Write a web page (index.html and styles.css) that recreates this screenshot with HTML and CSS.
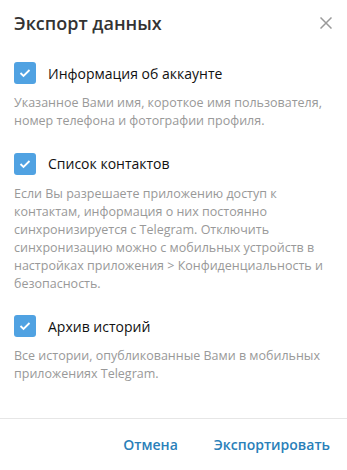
FILE: index.html
```html
<!DOCTYPE html>
<html lang="ru">
<head>
    <meta charset="UTF-8">
    <meta name="viewport" content="width=device-width, initial-scale=1.0">
    <title>Экспорт данных</title>
    <link rel="stylesheet" href="styles.css">
</head>
<body>
    <div class="dialog">
        <div class="dialog-header">
            <div class="dialog-title">Экспорт данных</div>
            <button class="btn-close" aria-label="Закрыть">
                <svg width="12" height="12" viewBox="0 0 12 12">
                    <path d="M0.5 0.5 L11.5 11.5 M11.5 0.5 L0.5 11.5" stroke="#9a9a9a" stroke-width="1.5" fill="none"/>
                </svg>
            </button>
        </div>

        <div class="dialog-body">
            <div class="option">
                <label class="option-row">
                    <span class="checkbox">
                        <svg width="12" height="10" viewBox="0 0 12 10">
                            <path d="M1.5 5 L4.5 8 L10.5 2" stroke="white" stroke-width="1.8" fill="none"/>
                        </svg>
                    </span>
                    <span class="option-label">Информация об аккаунте</span>
                </label>
                <div class="option-desc">Указанное Вами имя, короткое имя пользователя, номер телефона и фотографии профиля.</div>
            </div>

            <div class="option">
                <label class="option-row">
                    <span class="checkbox">
                        <svg width="12" height="10" viewBox="0 0 12 10">
                            <path d="M1.5 5 L4.5 8 L10.5 2" stroke="white" stroke-width="1.8" fill="none"/>
                        </svg>
                    </span>
                    <span class="option-label">Список контактов</span>
                </label>
                <div class="option-desc">Если Вы разрешаете приложению доступ к контактам, информация о них постоянно синхронизируется с Telegram. Отключить синхронизацию можно с мобильных устройств в настройках приложения &gt; Конфиденциальность и безопасность.</div>
            </div>

            <div class="option">
                <label class="option-row">
                    <span class="checkbox">
                        <svg width="12" height="10" viewBox="0 0 12 10">
                            <path d="M1.5 5 L4.5 8 L10.5 2" stroke="white" stroke-width="1.8" fill="none"/>
                        </svg>
                    </span>
                    <span class="option-label">Архив историй</span>
                </label>
                <div class="option-desc">Все истории, опубликованные Вами в мобильных приложениях Telegram.</div>
            </div>
        </div>

        <div class="dialog-footer">
            <button class="btn-link">Отмена</button>
            <button class="btn-link">Экспортировать</button>
        </div>
    </div>
</body>
</html>
```

FILE: styles.css
```css
* {
    margin: 0;
    padding: 0;
    box-sizing: border-box;
    font-family: 'Open Sans', sans-serif;
}

body {
    background: #fff;
    color: #000;
    width: 347px;
    height: 470px;
    overflow: hidden;
}

.dialog {
    display: flex;
    flex-direction: column;
    height: 470px;
}

.dialog-header {
    display: flex;
    justify-content: space-between;
    align-items: center;
    padding: 10px 15px 0 14px;
    height: 35px;
}

.dialog-title {
    font-size: 18px;
    font-weight: 600;
    color: #333;
}

.btn-close {
    background: none;
    border: none;
    width: 12px;
    height: 12px;
    cursor: pointer;
    display: flex;
}

.dialog-body {
    flex: 1;
    padding: 27px 14px 0 14px;
}

.option {
    margin-bottom: 22.5px;
}

.option-row {
    display: flex;
    align-items: center;
    gap: 12px;
    height: 22px;
    cursor: pointer;
}

.checkbox {
    width: 22px;
    height: 22px;
    border-radius: 3px;
    background: #50a2e2;
    display: flex;
    align-items: center;
    justify-content: center;
}

.option-label {
    font-size: 14px;
    color: #111;
}

.option-desc {
    margin-top: 10px;
    font-size: 12.5px;
    line-height: 18px;
    color: #999;
}

.dialog-footer {
    border-top: 1px solid #e6e6e6;
    display: flex;
    justify-content: flex-end;
    gap: 36px;
    padding: 0 17px 0 0;
    height: 52px;
    align-items: center;
}

.btn-link {
    background: none;
    border: none;
    color: #2a80b9;
    font-size: 14px;
    font-weight: 600;
    cursor: pointer;
}
```
